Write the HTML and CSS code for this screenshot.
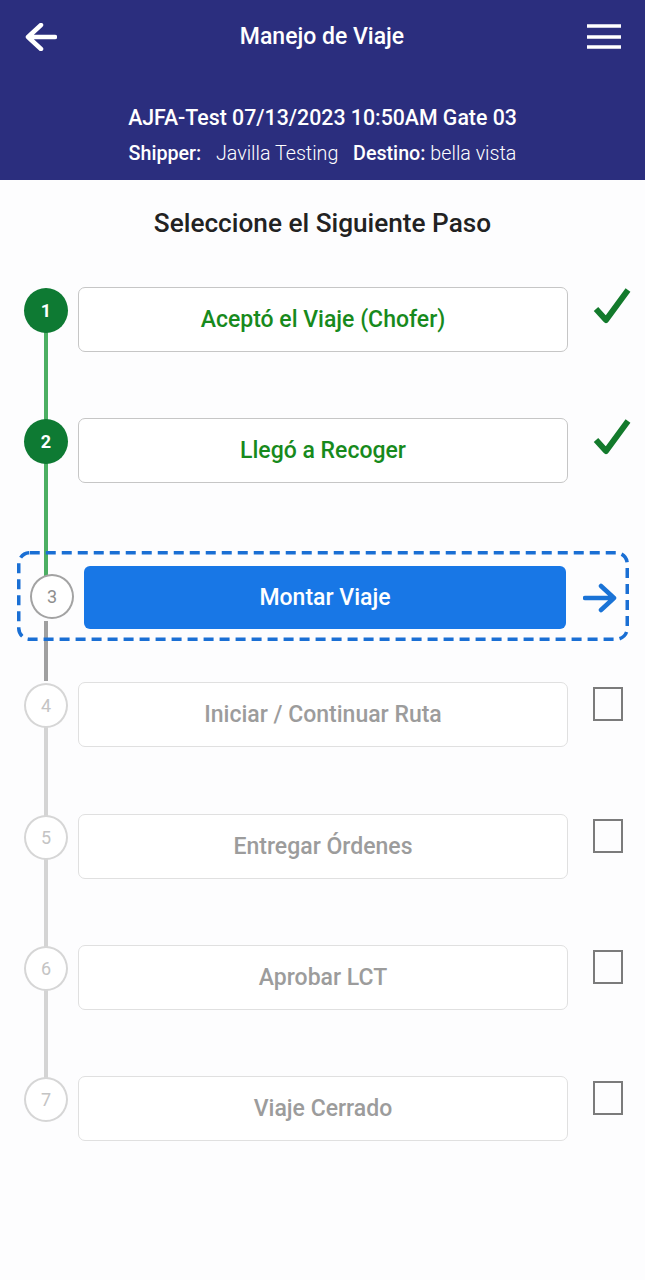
FILE: index.html
```html
<!DOCTYPE html>
<html lang="es">
<head>
<meta charset="utf-8">
<title>Manejo de Viaje</title>
<link rel="stylesheet" href="styles.css">
</head>
<body>
<header class="appbar">
  <div class="topbar">
    <svg class="icon-back" width="32" height="28" viewBox="0 0 32 28">
      <path d="M3 14 H30 M16 2 L3 14 L16 26" fill="none" stroke="#fff" stroke-width="4.5" stroke-linecap="round" stroke-linejoin="round"/>
    </svg>
    <h1 class="title">Manejo de Viaje</h1>
    <svg class="icon-menu" width="34" height="27" viewBox="0 0 34 27">
      <path d="M0 3 H34 M0 14 H34 M0 24 H34" stroke="#fff" stroke-width="3.4"/>
    </svg>
  </div>
  <div class="trip-info">
    <div class="trip-name">AJFA-Test 07/13/2023 10:50AM Gate 03</div>
    <div class="trip-meta"><b>Shipper:</b>&nbsp;&nbsp; <span class="light">Javilla Testing</span>&nbsp;&nbsp; <b>Destino:</b> <span class="light">bella vista</span></div>
  </div>
</header>

<main class="content">
  <h2 class="section-title">Seleccione el Siguiente Paso</h2>

  <ol class="steps">
    <li class="step step--done seg-green">
      <span class="dot dot--done">1</span>
      <div class="step-box step-box--done">Aceptó el Viaje (Chofer)</div>
      <svg class="status-check" width="38" height="38" viewBox="0 0 38 38"><path d="M3 22 L13 33 L35 3" fill="none" stroke="#137a2c" stroke-width="6" stroke-linejoin="round"/></svg>
    </li>
    <li class="step step--done seg-green seg-long">
      <span class="dot dot--done">2</span>
      <div class="step-box step-box--done">Llegó a Recoger</div>
      <svg class="status-check" width="38" height="38" viewBox="0 0 38 38"><path d="M3 22 L13 33 L35 3" fill="none" stroke="#137a2c" stroke-width="6" stroke-linejoin="round"/></svg>
    </li>
    <li class="step step--active">
      <svg class="active-outline" width="612" height="90" viewBox="0 0 612 90">
        <rect x="1.75" y="1.75" width="608.5" height="86.5" rx="11" fill="none" stroke="#1a6fd4" stroke-width="3.5" stroke-dasharray="10 6"/>
      </svg>
      <span class="dot dot--current">3</span>
      <button class="step-button">Montar Viaje</button>
      <svg class="status-arrow" width="34" height="30" viewBox="0 0 34 30"><path d="M2 15 H31 M18 3 L31 15 L18 27" fill="none" stroke="#1a73d6" stroke-width="4.5" stroke-linecap="round" stroke-linejoin="round"/></svg>
    </li>
    <li class="step step--pending seg-light step--gap-wide">
      <span class="dot dot--pending">4</span>
      <div class="step-box step-box--pending">Iniciar / Continuar Ruta</div>
      <span class="status-box"></span>
    </li>
    <li class="step step--pending seg-light">
      <span class="dot dot--pending">5</span>
      <div class="step-box step-box--pending">Entregar Órdenes</div>
      <span class="status-box"></span>
    </li>
    <li class="step step--pending seg-light">
      <span class="dot dot--pending">6</span>
      <div class="step-box step-box--pending">Aprobar LCT</div>
      <span class="status-box"></span>
    </li>
    <li class="step step--pending">
      <span class="dot dot--pending">7</span>
      <div class="step-box step-box--pending">Viaje Cerrado</div>
      <span class="status-box"></span>
    </li>
  </ol>
</main>
</body>
</html>
```

FILE: styles.css
```css
* { box-sizing: border-box; }

html, body {
  margin: 0;
  padding: 0;
  background: #fdfdfe;
  font-family: Roboto, "Liberation Sans", Arial, sans-serif;
}

.appbar {
  background: #2b2e7e;
  color: #fff;
  height: 180px;
}

.topbar {
  height: 74px;
  display: flex;
  align-items: center;
  padding: 0 24px 0 25px;
}

.icon-back { flex: 0 0 auto; margin-top: -1px; }
.icon-menu { flex: 0 0 auto; margin-top: -1px; }

.title {
  flex: 1;
  margin: 0;
  text-align: center;
  font-size: 23px;
  font-weight: 500;
  line-height: 28px;
}

.trip-info {
  margin-top: 30px;
  text-align: center;
}

.trip-name {
  font-size: 21.3px;
  font-weight: 500;
  line-height: 28px;
}

.trip-meta {
  margin-top: 9px;
  font-size: 19.7px;
  line-height: 26px;
}

.trip-meta b { font-weight: 500; }
.trip-meta .light { font-weight: 300; }

.content { padding-top: 25px; }

.section-title {
  margin: 0;
  text-align: center;
  font-size: 26.2px;
  font-weight: 500;
  line-height: 36px;
  color: #222;
}

.steps {
  list-style: none;
  margin: 46px 0 0;
  padding: 0;
}

.step {
  position: relative;
  display: grid;
  grid-template-columns: 78px 490px auto;
  align-items: start;
  height: 65px;
  margin-bottom: 66px;
}

.step--gap-wide { margin-bottom: 67px; }

.step::before {
  content: "";
  position: absolute;
  left: 44px;
  top: 23px;
  width: 4px;
  height: 132px;
  z-index: 0;
}

.seg-green::before { background: #4caf63; }
.seg-light::before { background: #d4d4d4; }
.seg-long { margin-bottom: 68px; }
.seg-long::before { height: 156px; }

.dot {
  position: relative;
  z-index: 1;
  width: 44px;
  height: 45px;
  margin: 1px 0 0 24px;
  border-radius: 50%;
  display: flex;
  align-items: center;
  justify-content: center;
  font-size: 18px;
}

.dot--done {
  background: #0e7a33;
  color: #fff;
  font-weight: 700;
}

.dot--current {
  margin: 0;
  background: #fff;
  border: 2.5px solid #a3a3a3;
  color: #8e8e8e;
}

.dot--pending {
  background: #fff;
  border: 2.5px solid #d6d6d6;
  color: #c4c4c4;
}

.step-box {
  height: 65px;
  border-radius: 7px;
  display: flex;
  align-items: center;
  justify-content: center;
  font-size: 23px;
  font-weight: 500;
  background: #fff;
}

.step-box--done {
  border: 1.5px solid #c6c6c6;
  color: #178a1c;
}

.step-box--pending {
  border: 1.5px solid #e0e0e0;
  color: #9c9c9c;
}

.status-check { margin-left: 25px; }

.status-box {
  margin: 5px 0 0 25px;
  width: 30px;
  height: 34px;
  border: 2.5px solid #7b7b7b;
}

.step--active {
  height: 90px;
  margin: 0 16px 41px 17px;
  padding: 0 12px 0 13px;
  grid-template-columns: 44px 482px auto;
  column-gap: 10px;
  align-items: center;
}

.active-outline {
  position: absolute;
  left: 0;
  top: 0;
  z-index: 2;
  pointer-events: none;
}

.step--active::before {
  left: 27px;
  top: 70px;
  height: 60px;
  background: #a0a0a0;
}

.step-button {
  height: 63px;
  margin-top: 3px;
  border: none;
  border-radius: 6px;
  background: #1877e6;
  color: #fff;
  font-family: inherit;
  font-size: 23px;
  font-weight: 500;
}

.status-arrow { margin-left: 7px; margin-top: 3px; }
```
